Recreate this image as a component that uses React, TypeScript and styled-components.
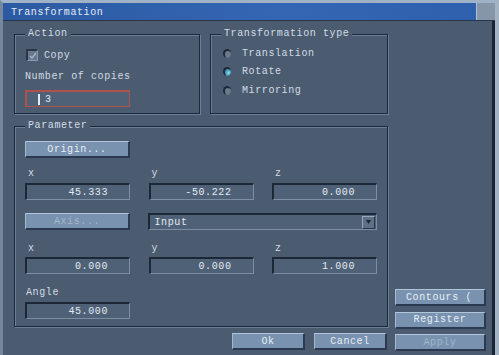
import React from "react";
import styled, { createGlobalStyle } from "styled-components";

const Global = createGlobalStyle`
  html, body { margin: 0; padding: 0; background: #4b5c70; }
  body { font-family: "Liberation Mono", "DejaVu Sans Mono", monospace; font-size: 10px; letter-spacing: 0.6px; }
  * { box-sizing: border-box; }
`;

const Window = styled.div`
  width: 499px;
  height: 355px;
  background: #4b5c70;
  border-top: 3px solid #9fb2c6;
  border-left: 3px solid #75889e;
  border-right: 4px solid #a3b3c3;
  display: flex;
  flex-direction: column;
  overflow: hidden;
  color: #d3dbe4;
`;

const TitleRow = styled.div`
  display: flex;
  height: 18px;
  border-bottom: 1px solid #27344a;
`;

const TitleBar = styled.div`
  flex: 1;
  background: linear-gradient(90deg, #2c5aa2, #3566b4 60%, #2f60ad);
  color: #e4ecf7;
  padding: 2px 0 0 8px;
  display: flex;
  align-items: center;
`;

const TitleSquare = styled.div`
  width: 19px;
  background: #8596a9;
  border-left: 1px solid #b3c1cf;
`;

const Body = styled.div`
  flex: 1;
  border-right: 3px solid #1a2437;
  padding: 7px 0 0 11px;
  display: grid;
  grid-template-columns: 374px 91px;
  column-gap: 7px;
`;

const Main = styled.div`
  display: flex;
  flex-direction: column;
`;

const TopRow = styled.div`
  display: flex;
  gap: 10px;
`;

const Group = styled.fieldset<{ $w: number; $h: number }>`
  width: ${(p) => p.$w}px;
  height: ${(p) => p.$h}px;
  margin: 0;
  padding: 0 10px;
  border: 1px solid #1d2838;
  box-shadow: inset 1px 1px 0 #6b7f95, 1px 1px 0 #6b7f95;
  min-width: 0;
`;

const Legend = styled.legend`
  padding: 0 3px;
  line-height: 12px;
  height: 12px;
  color: #d3dce6;
  background: #4b5c70;
`;

const GroupBody = styled.div<{ $pt: number; $pl?: number }>`
  display: flex;
  flex-direction: column;
  align-items: flex-start;
  padding-top: ${(p) => p.$pt}px;
  padding-left: ${(p) => p.$pl ?? 0}px;
`;

const CheckRow = styled.div`
  display: flex;
  align-items: center;
  gap: 6px;
  height: 14px;
  margin-left: 1px;
`;

const CheckBox = styled.span`
  width: 12px;
  height: 12px;
  background: #66788d;
  border-top: 2px solid #2a3648;
  border-left: 2px solid #2a3648;
  border-right: 1px solid #8a9cb0;
  border-bottom: 1px solid #8a9cb0;
  display: flex;
  align-items: center;
  justify-content: center;
`;

const Label = styled.div<{ $mt?: number }>`
  height: 12px;
  line-height: 12px;
  margin-top: ${(p) => p.$mt ?? 0}px;
  white-space: nowrap;
`;

const Field = styled.div<{ $active?: boolean; $align?: string }>`
  width: 105px;
  height: 17px;
  background: #4f6177;
  border-top: 2px solid ${(p) => (p.$active ? "#b0524c" : "#1c2737")};
  border-left: 2px solid ${(p) => (p.$active ? "#b0524c" : "#1c2737")};
  border-right: 1px solid ${(p) => (p.$active ? "#b0524c" : "#7b8ea3")};
  border-bottom: 1px solid ${(p) => (p.$active ? "#b0524c" : "#7b8ea3")};
  display: flex;
  align-items: center;
  justify-content: ${(p) => p.$align ?? "flex-end"};
  padding: 0 21px 0 6px;
  color: #e4eaf1;
  white-space: nowrap;
`;

const Caret = styled.span`
  width: 2px;
  height: 11px;
  background: #e6ecf2;
  margin: 0 5px 0 11px;
`;

const RadioRow = styled.div`
  display: flex;
  align-items: center;
  gap: 11px;
  height: 18.5px;
`;

const Radio = styled.span<{ $on?: boolean }>`
  width: 8px;
  height: 9px;
  border-radius: 50%;
  background: ${(p) => (p.$on ? "radial-gradient(circle at 60% 55%, #8fe0f0 0, #4aa6c4 45%, #3a6f88 100%)" : "#6a7b8e")};
  border-top: 2px solid #1e2a3a;
  border-left: 2px solid #1e2a3a;
`;

const ParamGroup = styled(Group)`
  margin-top: 6px;
`;

const Grid = styled.div<{ $mt?: number }>`
  display: grid;
  grid-template-columns: 105px 105px 105px;
  column-gap: 18.5px;
  align-items: center;
  margin-top: ${(p) => p.$mt ?? 0}px;
`;

const SmallLabel = styled.div<{ $pl?: number }>`
  height: 12px;
  line-height: 12px;
  padding-left: ${(p) => p.$pl ?? 3}px;
`;

const Button = styled.div<{ $disabled?: boolean; $w?: number; $left?: boolean }>`
  height: 17px;
  ${(p) => (p.$w ? `width: ${p.$w}px;` : "")}
  background: #7892af;
  border-top: 1px solid #b3c5d8;
  border-left: 1px solid #a5b8cc;
  border-right: 2px solid #2b3a50;
  border-bottom: 2px solid #2b3a50;
  color: ${(p) => (p.$disabled ? "#a4b6c9" : "#e8eef5")};
  display: flex;
  align-items: center;
  justify-content: ${(p) => (p.$left ? "flex-start" : "center")};
  padding-left: ${(p) => (p.$left ? 10 : 0)}px;
  white-space: nowrap;
  overflow: hidden;
`;

const Select = styled.div`
  grid-column: 2 / 4;
  margin-left: -1px;
  height: 17px;
  background: #4f6177;
  border-top: 2px solid #1c2737;
  border-left: 2px solid #1c2737;
  border-right: 1px solid #7b8ea3;
  border-bottom: 1px solid #7b8ea3;
  display: flex;
  align-items: center;
  justify-content: space-between;
  padding: 0 1px 0 5px;
  color: #e4eaf1;
`;

const SelectArrow = styled.span`
  width: 13px;
  height: 13px;
  background: #5e7086;
  border: 1px solid #98a9bb;
  border-right-color: #2a3648;
  border-bottom-color: #2a3648;
  display: flex;
  align-items: center;
  justify-content: center;
`;

const BottomRow = styled.div`
  display: flex;
  justify-content: flex-end;
  gap: 9px;
  margin-top: 6px;
  padding-right: 1px;
`;

const Side = styled.div`
  display: flex;
  flex-direction: column;
  justify-content: flex-end;
  gap: 5.5px;
  padding-bottom: 4px;
`;

export default function App() {
  return (
    <>
      <Global />
      <Window>
        <TitleRow>
          <TitleBar>Transformation</TitleBar>
          <TitleSquare />
        </TitleRow>
        <Body>
          <Main>
            <TopRow>
              <Group $w={186} $h={86}>
                <Legend>Action</Legend>
                <GroupBody $pt={8}>
                  <CheckRow>
                    <CheckBox>
                      <svg width="8" height="8" viewBox="0 0 8 8">
                        <path d="M1 4 L3 6 L7 1" stroke="#a9b8c8" strokeWidth="1.3" fill="none" />
                      </svg>
                    </CheckBox>
                    <span>Copy</span>
                  </CheckRow>
                  <Label $mt={9}>Number of copies</Label>
                  <Field $active $align="flex-start" style={{ marginTop: 7, padding: 0 }}>
                    <Caret />3
                  </Field>
                </GroupBody>
              </Group>
              <Group $w={178} $h={86}>
                <Legend>Transformation type</Legend>
                <GroupBody $pt={4} $pl={2}>
                  <RadioRow>
                    <Radio />
                    <span>Translation</span>
                  </RadioRow>
                  <RadioRow>
                    <Radio $on />
                    <span>Rotate</span>
                  </RadioRow>
                  <RadioRow>
                    <Radio />
                    <span>Mirroring</span>
                  </RadioRow>
                </GroupBody>
              </Group>
            </TopRow>
            <ParamGroup $w={374} $h={207}>
              <Legend>Parameter</Legend>
              <GroupBody $pt={9}>
                <Grid>
                  <Button>Origin...</Button>
                </Grid>
                <Grid $mt={10}>
                  <SmallLabel>x</SmallLabel>
                  <SmallLabel>y</SmallLabel>
                  <SmallLabel>z</SmallLabel>
                </Grid>
                <Grid $mt={3}>
                  <Field>45.333</Field>
                  <Field>-50.222</Field>
                  <Field>0.000</Field>
                </Grid>
                <Grid $mt={13}>
                  <Button $disabled>Axis...</Button>
                  <Select>
                    <span>Input</span>
                    <SelectArrow>
                      <svg width="5" height="4" viewBox="0 0 5 4">
                        <path d="M0 0 L5 0 L2.5 4 Z" fill="#1b2534" />
                      </svg>
                    </SelectArrow>
                  </Select>
                </Grid>
                <Grid $mt={13}>
                  <SmallLabel>x</SmallLabel>
                  <SmallLabel>y</SmallLabel>
                  <SmallLabel>z</SmallLabel>
                </Grid>
                <Grid $mt={2}>
                  <Field>0.000</Field>
                  <Field>0.000</Field>
                  <Field>1.000</Field>
                </Grid>
                <Grid $mt={13}>
                  <SmallLabel $pl={1}>Angle</SmallLabel>
                </Grid>
                <Grid $mt={3}>
                  <Field>45.000</Field>
                </Grid>
              </GroupBody>
            </ParamGroup>
            <BottomRow>
              <Button $w={73}>Ok</Button>
              <Button $w={73}>Cancel</Button>
            </BottomRow>
          </Main>
          <Side>
            <Button $left>Contours (</Button>
            <Button>Register</Button>
            <Button $disabled>Apply</Button>
          </Side>
        </Body>
      </Window>
    </>
  );
}
